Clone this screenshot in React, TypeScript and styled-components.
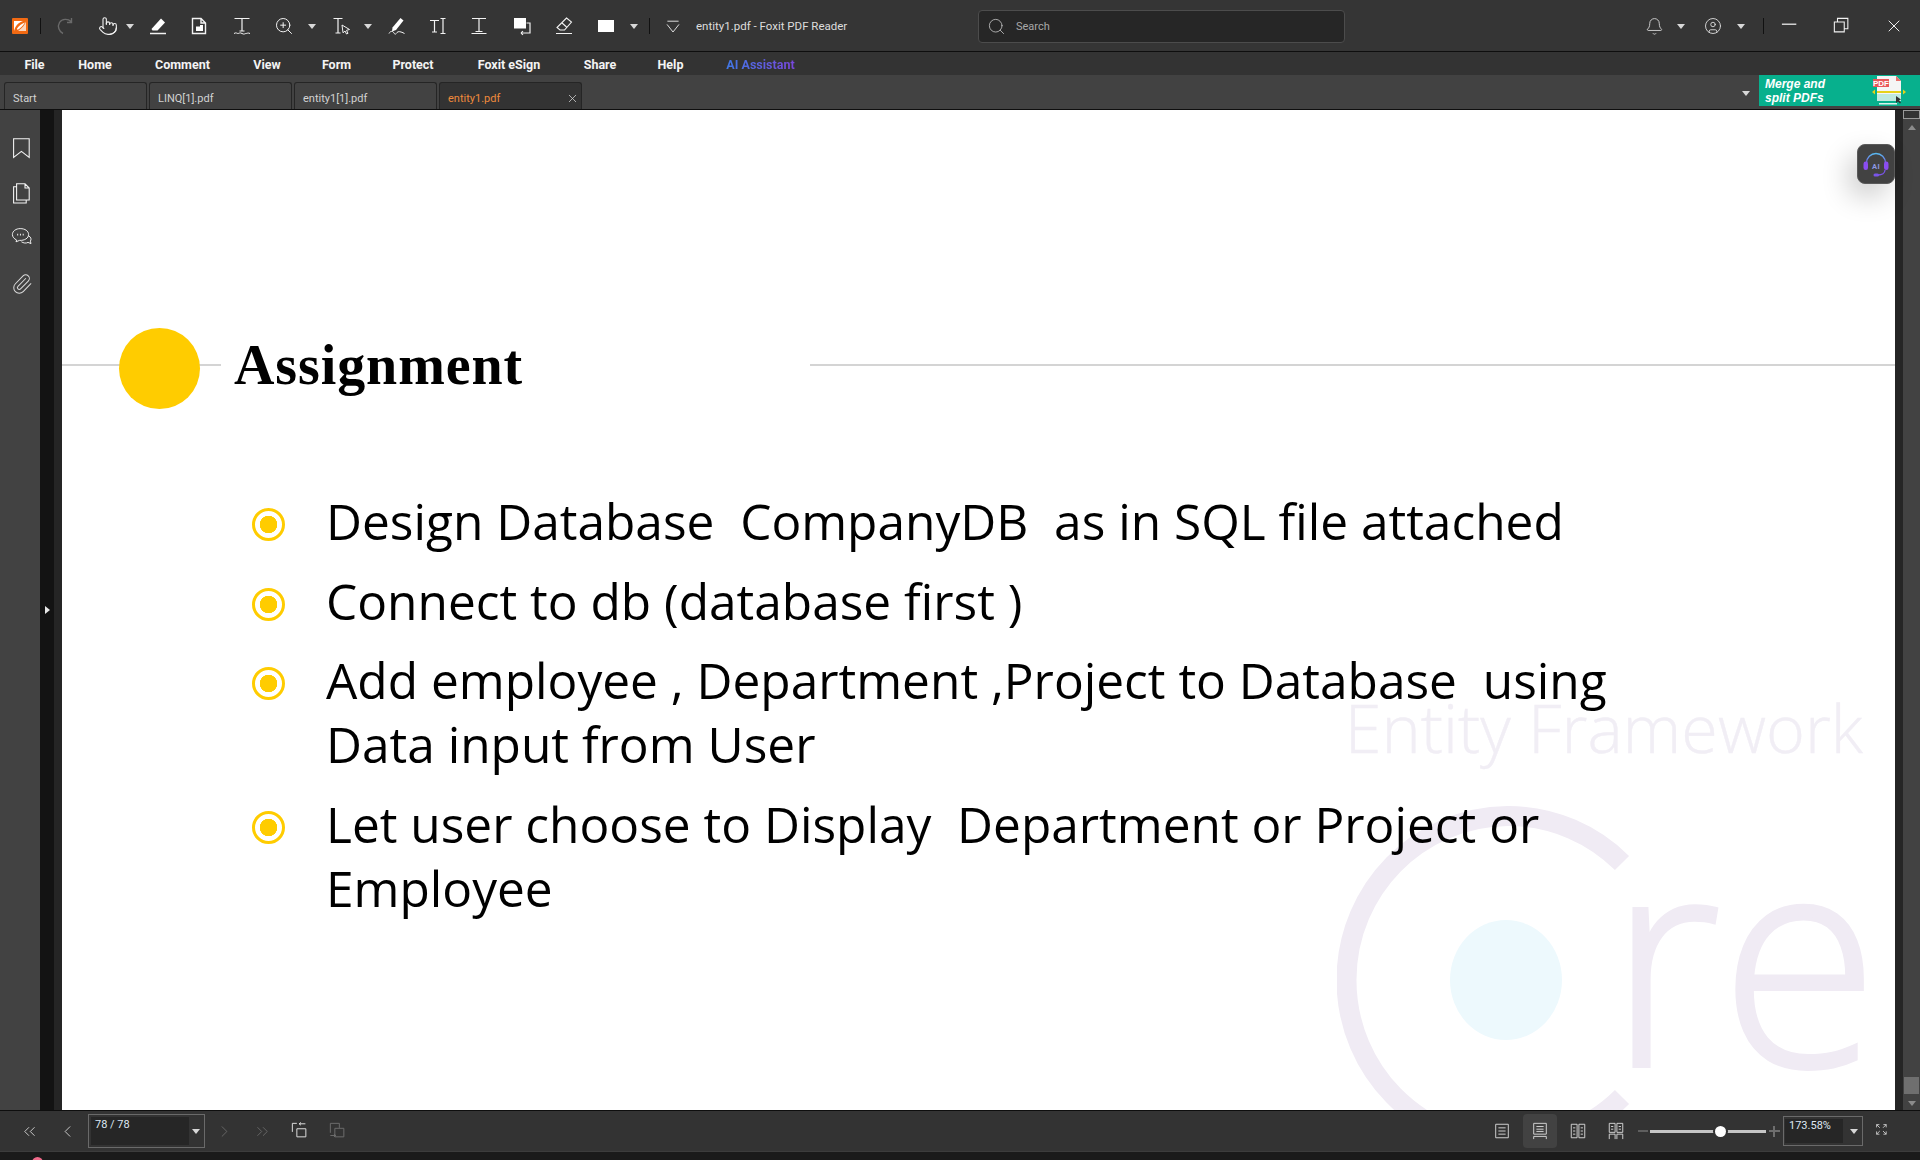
import React from "react"
import styled, { createGlobalStyle } from "styled-components"
import { Bell, ChevronLeft, ChevronRight, ChevronsLeft, ChevronsRight, CircleUser, Paperclip, Pointer, Search, X, ZoomIn } from "lucide-react"

const GlobalStyle = createGlobalStyle`
  html, body {
    margin: 0;
    padding: 0;
    background: #fff;
    overflow: hidden;
  }
  * {
    box-sizing: border-box;
  }
`

const Draw = styled.svg`
  display: block;
  fill: none;
  stroke: currentColor;
  stroke-width: 1.4;
  flex: none;
`

const Ico: React.FC<{ size?: number; children: React.ReactNode }> = ({ size = 20, children }) => (
  <Draw width={size} height={size} viewBox="0 0 20 20">
    {children}
  </Draw>
)

const Caret = styled.i`
  display: block;
  width: 0;
  height: 0;
  border-left: 4px solid transparent;
  border-right: 4px solid transparent;
  border-top: 5px solid #d8d8d8;
`

const toolbar: { w: number; dim?: boolean; caret?: boolean; icon?: React.ReactNode }[] = [
  {
    w: 48,
    dim: true,
    icon: (
      <Ico>
        <path d="M16 5.500C13 2.500 7 2.500 4.500 6.500c-2.300 4-.5 9 3.500 11M12 6.500h4.500V2" />
      </Ico>
    ),
  },
  { w: 38, icon: <Pointer size={20} strokeWidth={1.3} /> },
  { w: 6, caret: true },
  {
    w: 50,
    icon: (
      <Ico>
        <path d="M13 2.500l4 4-7.500 8H4.500l-1-1.500z" fill="#fff" stroke="none" />
        <path d="M2 17.500h16" strokeWidth="1.500" />
      </Ico>
    ),
  },
  {
    w: 32,
    icon: (
      <Ico>
        <path d="M3.500 2.500h8.500l4.500 4.500v10.500h-13zM12 2.500V7h4.500" strokeWidth="1.400" />
        <path d="M7 10.500h4v-1.500h3v6H7z" fill="#fff" stroke="none" />
      </Ico>
    ),
  },
  {
    w: 54,
    icon: (
      <Ico>
        <path d="M2.500 2.500h15M10 2.500V15M7.500 15h5" strokeWidth="1.200" />
        <path d="M2 17.500c2-1.300 3 0 4 0s2-1.300 4 0 3 0 4 0 2-1 4 0" strokeWidth="1" />
      </Ico>
    ),
  },
  { w: 30, icon: <ZoomIn size={20} strokeWidth={1.2} /> },
  { w: 26, caret: true },
  {
    w: 34,
    icon: (
      <Ico>
        <path d="M1.500 2.500h9M6 2.500V17M3.500 17h5" strokeWidth="1.200" />
        <path d="M10 9l7.500 4.500-3 .8 1.500 3-1.500.7-1.500-3-2 1.800z" fill="#333" strokeWidth="1" />
      </Ico>
    ),
  },
  { w: 18, caret: true },
  {
    w: 40,
    icon: (
      <Ico>
        <path d="M13.500 2l3 2.500-7.500 9.500-4 1.500.5-4z" fill="#fff" stroke="none" />
        <path d="M2 17.500c1.500-3 4-2.500 5-.5s2 1 3-.5 4-1 7.500 1" strokeWidth="1" />
      </Ico>
    ),
  },
  {
    w: 42,
    icon: (
      <Ico>
        <path d="M2 4.500h9M6.500 4.500V16M4 16h5M15 2.500V17.500M12.500 2.500h5M12.500 17.500h5" strokeWidth="1.200" />
      </Ico>
    ),
  },
  {
    w: 40,
    icon: (
      <Ico>
        <path d="M3 2.500h14M10 2.500V15.500M6.500 15.500h7M2.500 17.500h15" strokeWidth="1.200" />
      </Ico>
    ),
  },
  {
    w: 46,
    icon: (
      <Ico>
        <path d="M2 2h12v10.500H2z" fill="#fff" stroke="none" />
        <path d="M14.500 7h3.500v10H9" strokeWidth="1.200" />
        <path d="M9 17l2-1.800M9 17l2 1.800" strokeWidth="1.100" />
      </Ico>
    ),
  },
  {
    w: 38,
    icon: (
      <Ico>
        <path d="M12.500 2l5 4-7 8H6L3 11.500zM7.500 6.500l5 4.500M2 17.500h16" strokeWidth="1.100" />
      </Ico>
    ),
  },
  {
    w: 46,
    icon: (
      <Ico>
        <path d="M2 4h16v12H2z" fill="#fff" stroke="none" />
      </Ico>
    ),
  },
  { w: 10, caret: true },
]

const menuItems: { label: string; w: number }[] = [
  { label: "File", w: 21 },
  { label: "Home", w: 36 },
  { label: "Comment", w: 60 },
  { label: "View", w: 30 },
  { label: "Form", w: 30 },
  { label: "Protect", w: 44 },
  { label: "Foxit eSign", w: 69 },
  { label: "Share", w: 34 },
  { label: "Help", w: 28 },
]

const tabs = [
  { label: "Start" },
  { label: "LINQ[1].pdf" },
  { label: "entity1[1].pdf" },
  { label: "entity1.pdf", active: true },
]

const points = [
  "Design Database  CompanyDB  as in SQL file attached",
  "Connect to db (database first )",
  "Add employee , Department ,Project to Database  using Data input from User",
  "Let user choose to Display  Department or Project or Employee",
]

const App: React.FC = () => {
  return (
    <Window>
      <GlobalStyle />
      <TitleBar>
        <Logo>
          <svg width="16" height="16" viewBox="0 0 16 16">
            <rect width="16" height="16" rx="1" fill="#f26a13" />
            <path d="M2 3h9C8 4 5 6 3.500 9 3 10 2.500 11 2 13z" fill="#fff" />
            <path d="M14 3.500C13 7 10 10 6 13h8z" fill="#fbd6bd" />
            <path d="M5 10.500C7 7.500 10 5.500 13 4.500 11 7.500 8.500 10 5.500 12z" fill="#fff" />
          </svg>
        </Logo>
        <Divider />
        {toolbar.map((t, i) => (
          <ToolBtn key={i} $w={t.w} $dim={t.dim}>
            {t.caret ? <Caret /> : t.icon}
          </ToolBtn>
        ))}
        <TitleGap />
        <Divider />
        <ToolBtn $w={46}>
          <Ico size={16}>
            <path d="M3 4h14M2.500 8l7.500 9.500L17.500 8" strokeWidth="1.100" />
          </Ico>
        </ToolBtn>
        <DocTitle>entity1.pdf - Foxit PDF Reader</DocTitle>
        <SearchBox>
          <Search size={19} strokeWidth={1} />
          <SearchText>Search</SearchText>
        </SearchBox>
        <WinControls>
          <ToolBtn $w={40}>
            <Bell size={19} strokeWidth={1.2} color="#cfcfcf" />
          </ToolBtn>
          <ToolBtn $w={14}>
            <Caret />
          </ToolBtn>
          <ToolBtn $w={49}>
            <CircleUser size={18} strokeWidth={1.2} color="#dcdcdc" />
          </ToolBtn>
          <ToolBtn $w={8}>
            <Caret />
          </ToolBtn>
          <WinGap />
          <Divider />
          <ToolBtn $w={52}>
            <Ico size={18}>
              <path d="M1 8h16" />
            </Ico>
          </ToolBtn>
          <ToolBtn $w={52}>
            <Ico size={18}>
              <path d="M1.500 5.500h11v11h-11zM5 5V1.500h11.500V13H13" strokeWidth="1.200" />
            </Ico>
          </ToolBtn>
          <ToolBtn $w={52}>
            <X size={20} strokeWidth={1.1} color="#fff" />
          </ToolBtn>
        </WinControls>
      </TitleBar>

      <MenuBar>
        {menuItems.map((m) => (
          <MenuItem key={m.label} $w={m.w}>
            {m.label}
          </MenuItem>
        ))}
        <AiItem $w={73}>AI Assistant</AiItem>
      </MenuBar>

      <TabBar>
        {tabs.map((t) => (
          <Tab key={t.label} $active={t.active}>
            {t.label}
            {t.active && (
              <TabClose>
                <X size={13} strokeWidth={1.4} />
              </TabClose>
            )}
          </Tab>
        ))}
        <TabMore>
          <Caret />
        </TabMore>
        <Promo>
          <PromoText>
            Merge and
            <br />
            split PDFs
          </PromoText>
          <svg width="34" height="30" viewBox="0 0 34 30">
            <path d="M5 0h19l5 5v18H5z" fill="#f5f5f5" />
            <path d="M24 0l5 5h-5z" fill="#e9716d" />
            <rect x="1" y="3" width="16" height="8" fill="#e9565a" />
            <PromoLabel x="9" y="9.500" textAnchor="middle">
              PDF
            </PromoLabel>
            <rect x="5" y="15" width="24" height="2" fill="#e6d21a" />
            <path d="M0 16l3-2.500v5zM34 16l-3-2.500v5z" fill="#e6d21a" />
            <rect x="5" y="18" width="24" height="7" fill="#bfe9df" />
            <rect x="7" y="27" width="18" height="1.500" fill="#d8f3ec" />
            <path d="M24 20v7l2-1.500 2 2 1-1-2-2 2-1z" fill="#333" />
          </svg>
        </Promo>
      </TabBar>

      <Main>
        <SideBar>
          <SideIcon>
            <Ico size={24}>
              <path d="M3 1.500h13v15.500l-6.500-5-6.500 5z" strokeWidth="0.900" />
            </Ico>
          </SideIcon>
          <SideIcon>
            <Ico size={24}>
              <path d="M5.500 1.500h7l3.500 3.500v10H5.500zM12.500 1.500V5H16M5.500 4H3v13.500h10.500V15" strokeWidth="0.900" />
            </Ico>
          </SideIcon>
          <SideIcon $up={2}>
            <Ico size={24}>
              <path d="M8.500 3C5 3 2 5 2 8c0 2 1.500 3.500 3.500 4.500l-.5 1.500 3-1.200c4 .3 7.500-1.800 7.500-4.800S12.500 3 8.500 3zM15.500 9c2 1 2.500 3 1.500 4.500l.5 2-2.500-1c-1.500 1-4 .5-5.500-.5" strokeWidth="0.800" />
              <path d="M6 8h.8M8.300 8h.8M10.600 8h.8" strokeWidth="1.300" />
            </Ico>
          </SideIcon>
          <SideIcon>
            <Paperclip size={22} strokeWidth={1.1} color="#dcdcdc" />
          </SideIcon>
        </SideBar>
        <Gutter>
          <ExpandArrow />
        </Gutter>
        <GutterEdge />
        <Page>
          <Watermark>
            <WatermarkTitle>Entity Framework</WatermarkTitle>
            <CoreMark>
              <svg width="300" height="304" viewBox="0 0 300 304">
                <path d="M285 57A162 164 0 1 0 285 291" fill="none" stroke="#f0ebf4" strokeWidth="20" />
                <ellipse cx="169" cy="174" rx="56" ry="60" fill="#edf9fd" />
              </svg>
              <CoreLetters>re</CoreLetters>
            </CoreMark>
          </Watermark>
          <SlideHead>
            <RuleLeft />
            <Dot />
            <Heading>Assignment</Heading>
            <RuleRight />
          </SlideHead>
          <List>
            {points.map((p) => (
              <Item key={p}>
                <Bullet />
                <ItemText>{p}</ItemText>
              </Item>
            ))}
          </List>
        </Page>
        <ScrollGutter />
        <ScrollBar>
          <ScrollSplit />
          <ScrollUp />
          <ScrollSpace />
          <ScrollThumb />
          <ScrollDown />
        </ScrollBar>
        <AiBubble>
          <svg width="26" height="26" viewBox="0 0 26 26">
            <defs>
              <linearGradient id="aiBand" x1="0" y1="0" x2="0" y2="1">
                <stop offset="0" stopColor="#58b8ee" />
                <stop offset="1" stopColor="#7d55ee" />
              </linearGradient>
            </defs>
            <path d="M3.500 13V11a9.500 9.500 0 0 1 19 0v2" fill="none" stroke="url(#aiBand)" strokeWidth="1.300" />
            <rect x="0.500" y="9.500" width="4.500" height="8.500" rx="2.200" fill="#8a4df0" />
            <rect x="21" y="9.500" width="4.500" height="8.500" rx="2.200" fill="#8a4df0" />
            <path d="M22 18c0 3-3 5-7 5" fill="none" stroke="#7a55ea" strokeWidth="1.300" />
            <rect x="10.500" y="21.500" width="5.500" height="3" rx="1.500" fill="#7a55ea" />
            <AiLabel x="13" y="17" textAnchor="middle">
              AI
            </AiLabel>
          </svg>
        </AiBubble>
      </Main>

      <StatusBar>
        <NavBtn>
          <ChevronsLeft size={19} strokeWidth={1.1} />
        </NavBtn>
        <NavBtn>
          <ChevronLeft size={19} strokeWidth={1.1} />
        </NavBtn>
        <PageBox>
          <PageField>78 / 78</PageField>
          <Caret />
        </PageBox>
        <NavBtn $dim>
          <ChevronRight size={19} strokeWidth={1.1} />
        </NavBtn>
        <NavBtn $dim>
          <ChevronsRight size={19} strokeWidth={1.1} />
        </NavBtn>
        <NavBtn>
          <Ico size={18}>
            <path d="M1.500 11V1.500h5M6.500 16.500V7.500h10v9zM9 2h7M9 2l2-1.500M9 2l2 1.500" strokeWidth="1.100" />
          </Ico>
        </NavBtn>
        <NavBtn $dim>
          <Ico size={18}>
            <path d="M1.500 12V1.500h10v5M6.500 16.500V7h10v9.500zM1.500 15h6M7.500 15l-2-1.500M7.500 15l-2 1.500" strokeWidth="1.100" />
          </Ico>
        </NavBtn>

        <ViewGroup>
          <NavBtn>
            <Ico size={18}>
              <path d="M3 2.500h14v15H3zM6 6.500h8M6 10h8M6 13.500h8" strokeWidth="1" />
            </Ico>
          </NavBtn>
          <NavBtn $on>
            <Ico size={18}>
              <path d="M3 1.500h14v12H3zM6 5h8M6 8h8M6 10.500h8M3 19v-3h14v3" strokeWidth="1" />
            </Ico>
          </NavBtn>
          <NavBtn>
            <Ico size={18}>
              <path d="M2.500 2.500h6.500v15H2.500zM11 2.500h6.500v15H11zM4.500 6.500h2.500M4.500 10h2.500M4.500 13.500h2.500M13 6.500h2.500M13 10h2.500M13 13.500h2.500" strokeWidth="1" />
            </Ico>
          </NavBtn>
          <NavBtn>
            <Ico size={18}>
              <path d="M2.500 1.500v10h6.500v-10zM11 1.500v10h6.500v-10zM2.500 19v-5.500h6.500V19M11 19v-5.500h6.500V19M4.500 5h2.500M4.500 8h2.500M13 5h2.500M13 8h2.500" strokeWidth="1" />
            </Ico>
          </NavBtn>
          <MinusMark>
            <MinusBar />
          </MinusMark>
          <Slider>
            <SliderKnob $at={56} />
          </Slider>
          <ZoomMark>
            <PlusBar />
          </ZoomMark>
          <ZoomBox>
            <ZoomField>173.58%</ZoomField>
            <Caret />
          </ZoomBox>
          <NavBtn $w={40}>
            <Ico size={16}>
              <path d="M2 2l4 4M2 2v3.500M2 2h3.500M14 2l-4 4M14 2v3.500M14 2h-3.500M2 14l4-4M2 14v-3.500M2 14h3.500M14 14l-4-4M14 14v-3.500M14 14h-3.500" strokeWidth="1" />
            </Ico>
          </NavBtn>
        </ViewGroup>
      </StatusBar>
      <TaskStrip>
        <TaskDot />
      </TaskStrip>
    </Window>
  )
}

const Window = styled.div`
  width: 1920px;
  height: 1160px;
  display: flex;
  flex-direction: column;
  overflow: hidden;
  background: #333;
  color: #fff;
  font-family: "Noto Sans", "Open Sans", sans-serif;
`

const TitleBar = styled.div`
  height: 52px;
  flex: none;
  display: flex;
  align-items: center;
  background: #353535;
  border-bottom: 1px solid #0e0e0e;
  padding-top: 1px;
`

const Logo = styled.div`
  width: 40px;
  display: flex;
  justify-content: center;
`

const Divider = styled.span`
  width: 1px;
  height: 16px;
  background: #111;
  flex: none;
`

const ToolBtn = styled.div<{ $w: number; $dim?: boolean }>`
  width: ${(p) => p.$w}px;
  height: 30px;
  flex: none;
  display: flex;
  align-items: center;
  justify-content: center;
  color: ${(p) => (p.$dim ? "#6a6a6a" : "#f2f2f2")};
`

const TitleGap = styled.span`
  width: 10px;
  flex: none;
`

const DocTitle = styled.div`
  width: 282px;
  flex: none;
  font: 400 11.5px/16px Roboto, sans-serif;
  color: #dddddd;
`

const SearchBox = styled.div`
  width: 367px;
  height: 33px;
  flex: none;
  display: flex;
  align-items: center;
  gap: 10px;
  padding-left: 8px;
  background: #262626;
  border: 1px solid #4c4c4c;
  border-radius: 4px;
  color: #c8c8c8;
`

const SearchText = styled.span`
  font: 400 11px Roboto, sans-serif;
  color: #a8a8a8;
`

const WinControls = styled.div`
  margin-left: auto;
  display: flex;
  align-items: center;
`

const WinGap = styled.span`
  width: 18px;
  flex: none;
`

const MenuBar = styled.div`
  height: 23px;
  flex: none;
  display: flex;
  align-items: center;
  gap: 39.5px;
  padding: 1px 0 0 24px;
  background: #333;
`

const MenuItem = styled.span<{ $w: number }>`
  width: ${(p) => p.$w}px;
  flex: none;
  display: flex;
  justify-content: center;
  white-space: nowrap;
  font: 700 12.5px Roboto, sans-serif;
  color: #f4f4f4;
  &:first-child {
    margin-right: -7.5px;
  }
`

const AiItem = styled(MenuItem)`
  background: linear-gradient(90deg, #3f7ae6, #7a45dc);
  -webkit-background-clip: text;
  background-clip: text;
  color: transparent;
`

const TabBar = styled.div`
  height: 35px;
  flex: none;
  display: flex;
  align-items: flex-end;
  background: #424242;
  border-bottom: 1px solid #0e0e0e;
  padding-left: 4px;
  gap: 2px;
  position: relative;
`

const Tab = styled.div<{ $active?: boolean }>`
  width: 143px;
  height: 27px;
  display: flex;
  align-items: center;
  justify-content: space-between;
  padding: 5px 2px 0 8px;
  background: ${(p) => (p.$active ? "#333" : "#424242")};
  border: 1px solid #252525;
  border-bottom: none;
  border-radius: 3px 3px 0 0;
  font: 400 11px Roboto, sans-serif;
  color: ${(p) => (p.$active ? "#ef8a3c" : "#d2d2d2")};
`

const TabClose = styled.span`
  display: flex;
  color: #d6d6d6;
`

const TabMore = styled.div`
  margin-left: auto;
  align-self: center;
  margin-top: 2px;
  margin-right: 7px;
`

const Promo = styled.div`
  width: 161px;
  height: 31px;
  align-self: flex-start;
  display: flex;
  align-items: center;
  justify-content: space-between;
  padding: 0 14px 0 6px;
  background: #07b08d;
`

const PromoText = styled.div`
  font: italic 700 12px/14px "Liberation Sans", sans-serif;
  color: #fff;
`

const PromoLabel = styled.text`
  font: 700 8px "Liberation Sans", sans-serif;
  fill: #fff;
`

const Main = styled.div`
  height: 1000px;
  flex: none;
  display: flex;
  position: relative;
  overflow: hidden;
`

const SideBar = styled.div`
  width: 40px;
  flex: none;
  display: flex;
  flex-direction: column;
  align-items: center;
  padding-top: 19px;
  gap: 6px;
  background: #424242;
  color: #f4f4f4;
`

const SideIcon = styled.div<{ $up?: number }>`
  width: 40px;
  height: 39px;
  display: flex;
  align-items: center;
  justify-content: center;
  padding: 0 0 ${(p) => (p.$up ?? 0) * 2}px 3px;
`

const Gutter = styled.div`
  width: 14px;
  flex: none;
  display: flex;
  align-items: center;
  justify-content: center;
  background: #131313;
`

const ExpandArrow = styled.i`
  display: block;
  width: 0;
  height: 0;
  border-top: 4px solid transparent;
  border-bottom: 4px solid transparent;
  border-left: 5px solid #e8e8e8;
`

const GutterEdge = styled.div`
  width: 8px;
  flex: none;
  background: #252525;
`

const Page = styled.div`
  width: 1833px;
  flex: none;
  background: #fff;
  color: #000;
  position: relative;
  overflow: hidden;
  padding-top: 218px;
`

const Watermark = styled.div`
  position: absolute;
  left: 1275px;
  top: 583px;
  width: 558px;
  height: 417px;
`

const WatermarkTitle = styled.div`
  position: absolute;
  right: 32px;
  top: -10px;
  font: 300 66.500px/88px "Open Sans", sans-serif;
  -webkit-text-stroke: 0.4px #f1eef5;
  color: #f1eef5;
  white-space: nowrap;
`

const CoreMark = styled.div`
  position: absolute;
  left: 0;
  top: 113px;
  width: 558px;
  height: 304px;
  overflow: hidden;
  svg {
    position: absolute;
    left: 0;
    top: 0;
  }
`

const CoreLetters = styled.span`
  position: absolute;
  left: 272px;
  top: -4px;
  font: 300 296px/300px "Open Sans", sans-serif;
  color: #f0ebf4;
  -webkit-text-stroke: 4px #f0ebf4;
  transform: scaleX(0.97);
  transform-origin: left top;
`

const SlideHead = styled.div`
  height: 81px;
  display: flex;
  align-items: flex-start;
  position: relative;
`

const RuleLeft = styled.div`
  width: 159px;
  height: 2px;
  margin-top: 36px;
  background: #d4d4d4;
`

const Dot = styled.div`
  position: absolute;
  left: 57px;
  top: 0;
  width: 81px;
  height: 81px;
  border-radius: 50%;
  background: #ffcc00;
`

const Heading = styled.h1`
  width: 589px;
  margin: 0;
  padding-left: 13px;
  font: 700 56px/74px "Liberation Serif", serif;
  letter-spacing: 0.9px;
  color: #000;
`

const RuleRight = styled.div`
  flex: 1;
  height: 2px;
  margin-top: 36px;
  background: #d4d4d4;
`

const List = styled.ul`
  list-style: none;
  margin: 80px 0 0;
  padding: 0 0 0 190px;
  display: flex;
  flex-direction: column;
  gap: 15.500px;
`

const Item = styled.li`
  display: flex;
  align-items: flex-start;
  gap: 41px;
  position: relative;
`

const Bullet = styled.span`
  width: 33px;
  height: 33px;
  flex: none;
  margin-top: 19px;
  border-radius: 50%;
  border: 3px solid #ffcc00;
  background: radial-gradient(circle, #ffcc00 0 8.500px, #fff 9px);
`

const ItemText = styled.div`
  width: 1300px;
  font: 400 49.600px/64px "Open Sans", sans-serif;
  white-space: pre-wrap;
  color: #000;
`

const ScrollGutter = styled.div`
  width: 8px;
  flex: none;
  background: #252525;
`

const ScrollBar = styled.div`
  width: 17px;
  flex: none;
  display: flex;
  flex-direction: column;
  align-items: center;
  background: #424242;
`

const ScrollSplit = styled.div`
  width: 17px;
  height: 9px;
  flex: none;
  border: 1px solid #9a9a9a;
  background: #333;
`

const ScrollUp = styled.i`
  display: block;
  margin-top: 6px;
  width: 0;
  height: 0;
  border-left: 4.500px solid transparent;
  border-right: 4.500px solid transparent;
  border-bottom: 5px solid #8c8c8c;
`

const ScrollSpace = styled.div`
  flex: 1;
`

const ScrollThumb = styled.div`
  width: 15px;
  height: 17px;
  background: #6f6f6f;
`

const ScrollDown = styled.i`
  display: block;
  margin: 7px 0 4px;
  width: 0;
  height: 0;
  border-left: 4.500px solid transparent;
  border-right: 4.500px solid transparent;
  border-top: 5px solid #8c8c8c;
`

const AiBubble = styled.div`
  position: absolute;
  left: 1857px;
  top: 34px;
  width: 38px;
  height: 40px;
  display: flex;
  align-items: center;
  justify-content: center;
  padding-top: 2px;
  background: #424242;
  border: 1px solid #5a5a5a;
  border-radius: 8px;
  box-shadow: -8px 12px 28px rgba(0, 0, 0, 0.2);
`

const AiLabel = styled.text`
  font: 700 7.500px Roboto, sans-serif;
  letter-spacing: 0.5px;
  fill: #8c98e4;
`

const StatusBar = styled.div`
  height: 42px;
  flex: none;
  display: flex;
  align-items: center;
  padding: 0 17px 0 10px;
  background: #333;
  border-top: 1px solid #0e0e0e;
  border-bottom: 1px solid #3c3c3c;
`

const NavBtn = styled.div<{ $dim?: boolean; $on?: boolean; $w?: number }>`
  width: ${(p) => (p.$on ? 34 : p.$w ?? 38)}px;
  height: 34px;
  margin: ${(p) => (p.$on ? "0 2px" : "0")};
  flex: none;
  display: flex;
  align-items: center;
  justify-content: center;
  border-radius: 4px;
  color: ${(p) => (p.$dim ? "#6c6c6c" : "#dedede")};
  background: ${(p) => (p.$on ? "#424242" : "transparent")};
`

const PageBox = styled.div`
  width: 117px;
  height: 34px;
  margin: 0 0 0 2px;
  flex: none;
  display: flex;
  align-items: center;
  justify-content: space-between;
  padding: 2px 4px 2px 2px;
  border: 1px solid #6a6a6a;
`

const PageField = styled.div`
  width: 98px;
  height: 28px;
  padding: 0 4px;
  background: #262626;
  font: 400 11px/16px Roboto, sans-serif;
  color: #dfe8f2;
`

const ViewGroup = styled.div`
  margin-left: auto;
  display: flex;
  align-items: center;
`

const ZoomMark = styled.div`
  width: 12px;
  flex: none;
  display: flex;
  justify-content: center;
`

const MinusMark = styled(ZoomMark)`
  margin-left: 2px;
`

const MinusBar = styled.i`
  display: block;
  width: 10px;
  height: 2px;
  background: #5f5f5f;
`

const PlusBar = styled.i`
  display: block;
  width: 11px;
  height: 11px;
  background: linear-gradient(#6e6e6e, #6e6e6e) center / 100% 2px no-repeat,
    linear-gradient(#6e6e6e, #6e6e6e) center / 2px 100% no-repeat;
`

const Slider = styled.div`
  width: 116px;
  height: 3px;
  margin: 0 2px 0 1px;
  flex: none;
  position: relative;
  background: #c6c6c6;
`

const SliderKnob = styled.i<{ $at: number }>`
  position: absolute;
  left: ${(p) => p.$at}%;
  top: -4px;
  width: 11px;
  height: 11px;
  border-radius: 50%;
  background: #fff;
  box-shadow: 0 0 0 2px #333;
`

const ZoomBox = styled.div`
  width: 80px;
  height: 30px;
  margin-left: 3px;
  flex: none;
  display: flex;
  align-items: center;
  justify-content: space-between;
  padding: 2px 4px 2px 1px;
  border: 1px solid #6a6a6a;
`

const ZoomField = styled.div`
  width: 58px;
  height: 24px;
  padding: 0 4px;
  background: #262626;
  font: 400 11px/14px Roboto, sans-serif;
  color: #dfe8f2;
`

const TaskStrip = styled.div`
  height: 8px;
  flex: none;
  background: #1a1a1a;
  position: relative;
  overflow: hidden;
`

const TaskDot = styled.i`
  position: absolute;
  left: 32px;
  top: 5px;
  width: 11px;
  height: 11px;
  border-radius: 50%;
  background: #f06a8a;
`

export default App
